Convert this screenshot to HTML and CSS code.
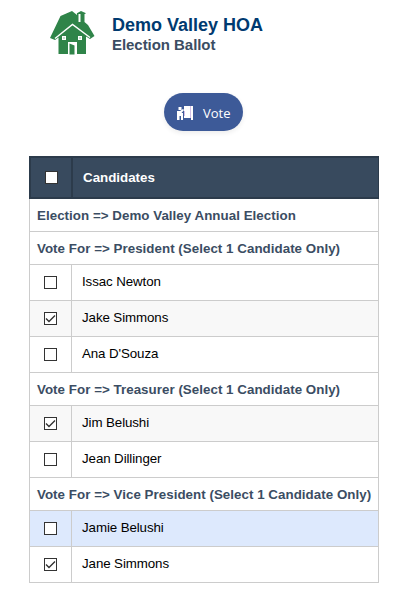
FILE: index.html
```html
<!DOCTYPE html>
<html lang="en">
<head>
  <meta charset="UTF-8">
  <meta name="viewport" content="width=device-width, initial-scale=1">
  <title>Election Ballot</title>
  <link rel="stylesheet" href="styles.css">
</head>
<body>

<!-- Header -->
<div class="header">
  <svg class="logo" width="45" height="44" viewBox="0 0 45 44">
    <path fill="#2f8449" d="M22 0L27 4V2.500H26.500L31 0L35.500 2V3H34.500V11L38 14L44.500 25L40 28L36 25.500V43H8.500V26.500L5 29L0 27L10.500 5Z"/>
    <path fill="none" stroke="#fff" stroke-width="1.500" d="M5 27.500L22.500 13.500L40 26.500"/>
    <path fill="#fff" d="M28.500 3h2v8h-2zM12 25h4v4h-4zM28 25h4v4h-4zM18 31h9v12h-9z"/>
    <path fill="#2f8449" d="M19.500 32.500l5 2v9h-5zM13.500 26.500h1v1h-1zM29.500 26.500h1v1h-1z"/>
  </svg>
  <div class="header-text">
    <h1>Demo Valley HOA</h1>
    <h2>Election Ballot</h2>
  </div>
</div>

<div class="actions">
  <button type="submit" form="ballotForm" class="vote-btn">
    <svg class="vote-icon" width="16" height="14" viewBox="0 0 16 14">
      <path fill="#fff" d="M1.500 1h3v3h-3zM0 5h3l3-2 1 1-2.500 3H6v7H4v-4H2.500v4H0zM7 0h6v12H7zM14 0h2v14h-2z"/>
      <path fill="#d3bfe6" d="M7 5h1v5H7zM13 0h1v12h-1z"/>
    </svg>
    <span>Vote</span>
  </button>
</div>

<!-- Ballot -->
<form id="ballotForm">
  <table class="ballot">
    <colgroup>
      <col class="col-check">
      <col>
    </colgroup>
    <thead>
      <tr>
        <th class="check"><input type="checkbox"></th>
        <th>Candidates</th>
      </tr>
    </thead>
    <tbody>
      <tr class="group"><td colspan="2">Election =&gt; Demo Valley Annual Election</td></tr>
      <tr class="group"><td colspan="2">Vote For =&gt; President (Select 1 Candidate Only)</td></tr>
      <tr>
        <td class="check"><input type="checkbox"></td>
        <td>Issac Newton</td>
      </tr>
      <tr class="alt">
        <td class="check"><input type="checkbox" checked></td>
        <td>Jake Simmons</td>
      </tr>
      <tr>
        <td class="check"><input type="checkbox"></td>
        <td>Ana D'Souza</td>
      </tr>
      <tr class="group"><td colspan="2">Vote For =&gt; Treasurer (Select 1 Candidate Only)</td></tr>
      <tr class="alt">
        <td class="check"><input type="checkbox" checked></td>
        <td>Jim Belushi</td>
      </tr>
      <tr>
        <td class="check"><input type="checkbox"></td>
        <td>Jean Dillinger</td>
      </tr>
      <tr class="group"><td colspan="2">Vote For =&gt; Vice President (Select 1 Candidate Only)</td></tr>
      <tr class="active">
        <td class="check"><input type="checkbox"></td>
        <td>Jamie Belushi</td>
      </tr>
      <tr>
        <td class="check"><input type="checkbox" checked></td>
        <td>Jane Simmons</td>
      </tr>
    </tbody>
  </table>
</form>

</body>
</html>
```
FILE: styles.css
```css
* {
  margin: 0;
  padding: 0;
  box-sizing: border-box;
}
body {
  font-family: "Liberation Sans", Arial, sans-serif;
  background-color: #fff;
}
.header {
  display: flex;
  padding: 11px 0 0 50px;
  height: 93px;
}
.header-text {
  margin-left: 17px;
  padding-top: 3px;
}
h1 {
  font-size: 18px;
  line-height: 22px;
  color: #003a70;
}
h2 {
  font-size: 15px;
  line-height: 17px;
  letter-spacing: -0.05px;
  color: #3b4d63;
}
.actions {
  display: flex;
  padding-left: 164px;
  height: 63px;
}
.vote-btn {
  display: flex;
  align-items: center;
  gap: 10px;
  width: 79px;
  height: 38px;
  padding: 2px 0 0 13px;
  border: none;
  border-radius: 19px;
  background-color: #3d5a98;
  box-shadow: 0 2px 5px rgba(0,0,0,0.08);
  color: white;
  font-family: "Open Sans", sans-serif;
  font-size: 13px;
  cursor: pointer;
}
.ballot {
  width: 350px;
  margin-left: 29px;
  table-layout: fixed;
  border-collapse: separate;
  border-spacing: 0;
  font-size: 13.33px;
}
.col-check {
  width: 43px;
}
th {
  height: 43px;
  padding-left: 10px;
  text-align: left;
  background-color: #384a5e;
  color: white;
  border: solid #2c3b4b;
  border-width: 2px 1px 2px 1px;
}
td {
  height: 36px;
  padding: 0 0 2px 10px;
  letter-spacing: -0.1px;
  color: #000;
  border-right: 1px solid #ccc;
  border-bottom: 1px solid #ccc;
}
.group td {
  height: 33px;
  padding: 0 0 0 7px;
  border-left: 1px solid #ccc;
  font-weight: bold;
  letter-spacing: 0.04px;
  color: #3b4d63;
  white-space: nowrap;
}
.check {
  padding: 0;
  text-align: center;
}
td.check {
  padding: 0;
  border-left: 1px solid #ccc;
}
th.check {
  border-left-width: 2px;
}
.alt td {
  background-color: #f8f8f8;
}
.active td {
  background-color: #dde9fd;
}
input[type="checkbox"] {
  appearance: none;
  display: block;
  width: 13px;
  height: 13px;
  margin: 0 auto;
  border: 1px solid #333;
  background-color: #fff;
}
input[type="checkbox"]:checked {
  background: #fff url("data:image/svg+xml,%3Csvg xmlns='http://www.w3.org/2000/svg' viewBox='0 0 11 11'%3E%3Cpath d='M1 5.500L4 8.500L10 2.500' fill='none' stroke='%23333' stroke-width='1.400'/%3E%3C/svg%3E") center / 11px 11px no-repeat;
}
```
